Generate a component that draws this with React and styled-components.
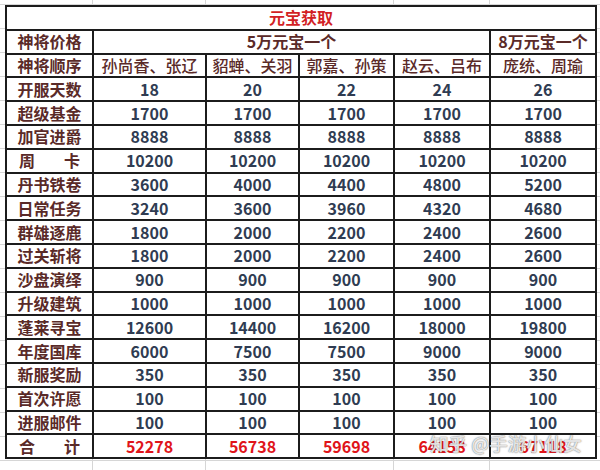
import React from 'react';
import styled, { createGlobalStyle } from 'styled-components';

const GlobalStyle = createGlobalStyle`
  html, body {
    margin: 0;
    padding: 0;
    background: #fff;
  }
`;

// spreadsheet grid behind the table
const Sheet = styled.div`
  position: relative;
  width: 600px;
  height: 470px;
  overflow: hidden;
  padding: 5px 0 0 5px;
  box-sizing: border-box;
  background-color: #fff;
  background-image:
    linear-gradient(to right, transparent 92px, #d6d6d6 92px, #d6d6d6 93px, transparent 93px),
    linear-gradient(to right, transparent 205px, #d6d6d6 205px, #d6d6d6 206px, transparent 206px),
    linear-gradient(to right, transparent 393px, #d6d6d6 393px, #d6d6d6 394px, transparent 394px),
    linear-gradient(to right, transparent 489px, #d6d6d6 489px, #d6d6d6 490px, transparent 490px),
    repeating-linear-gradient(to bottom, transparent 0, transparent 4px, #d6d6d6 4px, #d6d6d6 5px, transparent 5px, transparent 24px);
  font-family: "Noto Sans CJK SC", "Noto Sans", sans-serif;
`;

const Table = styled.table`
  border-collapse: collapse;
  table-layout: fixed;
  width: 590px;
  background: #fff;
`;

const Row = styled.tr`
  height: 23.8px;
`;

const tones = {
  title: '#d21f25',
  total: '#e0141a',
  label: '#5a2a28',
  name: '#5a2a28',
  num: '#2f3c52',
};

const Cell = styled.td`
  border: 2px solid #1c1c1c;
  padding: 0;
  line-height: 19px;
  text-align: center;
  font-size: 16px;
  white-space: nowrap;
  overflow: hidden;
  color: ${p => tones[p.$tone || 'num']};
  font-weight: ${p => p.$tone === 'name' ? 500 : 700};
`;

const Label = styled(Cell)`
  padding: 0 ${p => p.$spread ? '12px' : '0'};
  text-align: ${p => p.$spread ? 'justify' : 'center'};
  text-align-last: ${p => p.$spread ? 'justify' : 'center'};
`;

// zhihu watermark laid over the totals row
const Watermark = styled.div`
  position: absolute;
  left: 430px;
  top: 430px;
  font-size: 18.5px;
  font-weight: 500;
  color: rgba(255, 255, 255, 0.82);
  text-shadow: 0 0 1px rgba(70, 70, 70, 0.75), 0 0 2px rgba(70, 70, 70, 0.35);
  white-space: nowrap;
`;

const widths = [87, 113, 93, 95, 96, 106];

const heroes = ['孙尚香、张辽', '貂蝉、关羽', '郭嘉、孙策', '赵云、吕布', '庞统、周瑜'];

const rows = [
  ['开服天数', [18, 20, 22, 24, 26]],
  ['超级基金', [1700, 1700, 1700, 1700, 1700]],
  ['加官进爵', [8888, 8888, 8888, 8888, 8888]],
  ['周卡', [10200, 10200, 10200, 10200, 10200], true],
  ['丹书铁卷', [3600, 4000, 4400, 4800, 5200]],
  ['日常任务', [3240, 3600, 3960, 4320, 4680]],
  ['群雄逐鹿', [1800, 2000, 2200, 2400, 2600]],
  ['过关斩将', [1800, 2000, 2200, 2400, 2600]],
  ['沙盘演绎', [900, 900, 900, 900, 900]],
  ['升级建筑', [1000, 1000, 1000, 1000, 1000]],
  ['蓬莱寻宝', [12600, 14400, 16200, 18000, 19800]],
  ['年度国库', [6000, 7500, 7500, 9000, 9000]],
  ['新服奖励', [350, 350, 350, 350, 350]],
  ['首次许愿', [100, 100, 100, 100, 100]],
  ['进服邮件', [100, 100, 100, 100, 100]],
];

// totals skip the first row (days)
const totals = heroes.map((_, i) => rows.slice(1).reduce((s, r) => s + r[1][i], 0));

export default function App() {
  return (
    <>
      <GlobalStyle />
      <Sheet>
        <Table>
          <colgroup>
            {widths.map((w, i) => <col key={i} style={{ width: w }} />)}
          </colgroup>
          <tbody>
            <Row>
              <Cell colSpan={6} $tone="title">元宝获取</Cell>
            </Row>
            <Row>
              <Label $tone="label">神将价格</Label>
              <Cell colSpan={4} $tone="label">5万元宝一个</Cell>
              <Cell $tone="label">8万元宝一个</Cell>
            </Row>
            <Row>
              <Label $tone="label">神将顺序</Label>
              {heroes.map(h => <Cell key={h} $tone="name">{h}</Cell>)}
            </Row>
            {rows.map(([name, vals, spread]) => (
              <Row key={name}>
                <Label $tone="label" $spread={spread}>{spread ? name.split('').join(' ') : name}</Label>
                {vals.map((v, i) => <Cell key={i}>{v}</Cell>)}
              </Row>
            ))}
            <Row>
              <Label $tone="label" $spread>合 计</Label>
              {totals.map((t, i) => <Cell key={i} $tone="total">{t}</Cell>)}
            </Row>
          </tbody>
        </Table>
        <Watermark>知乎 @手游小仙女</Watermark>
      </Sheet>
    </>
  );
}
